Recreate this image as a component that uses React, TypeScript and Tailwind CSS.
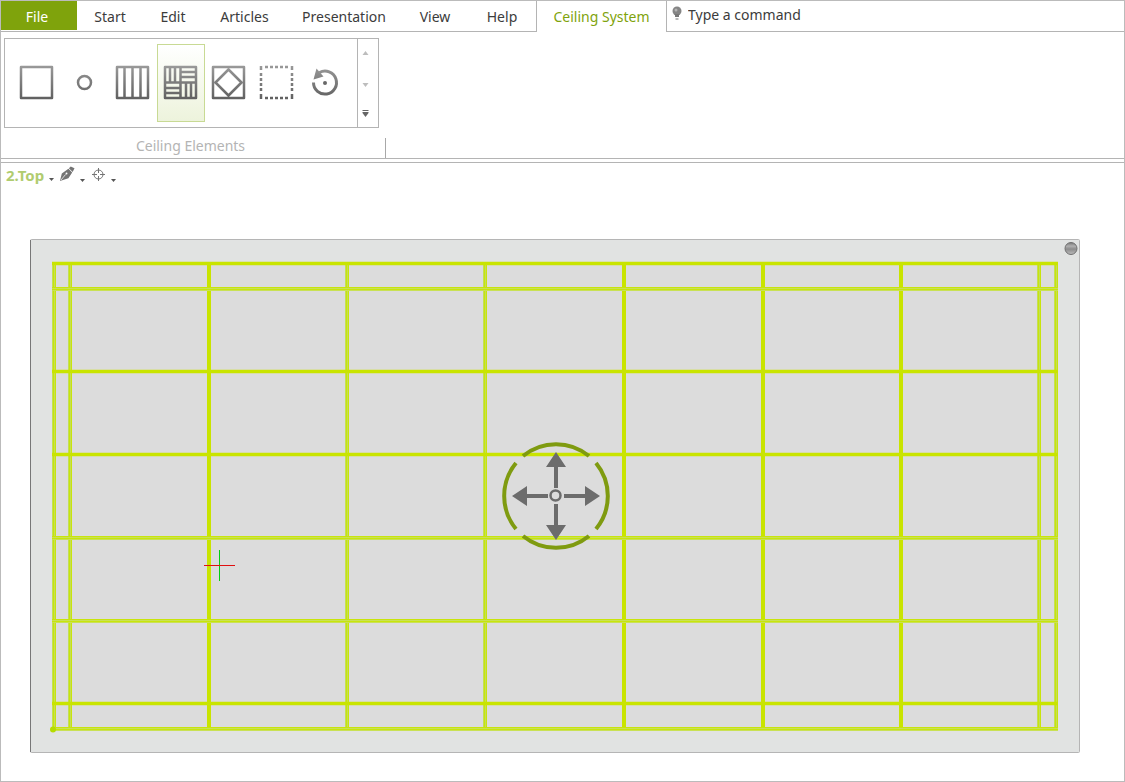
import { useState } from "react";

const tabs = [
  { label: "Start", width: "w-[66px]" },
  { label: "Edit", width: "w-[60px]" },
  { label: "Articles", width: "w-[83px]" },
  { label: "Presentation", width: "w-[116px]" },
  { label: "View", width: "w-[66px]" },
  { label: "Help", width: "w-[68px]" },
];

const elements = [
  {
    name: "Single panel",
    icon: <rect x="3" y="3" width="31" height="31" />,
  },
  {
    name: "Spotlight",
    icon: <circle cx="18.5" cy="18.5" r="6.5" />,
  },
  {
    name: "Strip panels",
    icon: <path d="M3 3h31v31h-31zM10.5 3v31M18.5 3v31M26.5 3v31" />,
  },
  {
    name: "Ceiling grid",
    icon: (
      <path d="M3 3h31v31h-31zM18.5 3v31M3 18.5h31M8 3v15M13 3v15M18.5 8h15M18.5 13h15M3 24h15M3 29h15M24 18.5v15M29 18.5v15" />
    ),
  },
  {
    name: "Diagonal panel",
    icon: <path d="M3 3h31v31h-31zM18.5 5.5l13 13l-13 13l-13 -13z" />,
  },
  {
    name: "Selection area",
    icon: (
      <path d="M3 2v4M3 9v3M3 14v3M3 19v3M3 24v3M3 30v5M34 2v4M34 9v3M34 14v3M34 19v3M34 24v3M34 30v5M7 3h3M12 3h3M17 3h3M22 3h3M27 3h3M7 34h3M12 34h3M17 34h3M22 34h3M27 34h3" />
    ),
  },
  {
    name: "Rotate",
    icon: (
      <>
        <path strokeWidth="3" d="M7.500 18.500a11.500 11.500 0 1 0 6 -10" />
        <path stroke="none" fill="url(#metal)" d="M10.500 4.500l-3 11l10 -3z" />
        <circle cx="19" cy="19" r="2" stroke="none" fill="#686868" />
      </>
    ),
  },
];

const columns = [
  { at: 54, double: true },
  { at: 70, double: true },
  { at: 209, double: false },
  { at: 347, double: true },
  { at: 485, double: true },
  { at: 624, double: false },
  { at: 763, double: false },
  { at: 901, double: false },
  { at: 1039, double: true },
  { at: 1056, double: true },
];

const rows = [
  { at: 288, double: true },
  { at: 371, double: false },
  { at: 454, double: false },
  { at: 537, double: true },
  { at: 620, double: true },
  { at: 728, double: true },
  { at: 703, double: false },
  { at: 263, double: false },
];

function Caret() {
  return (
    <svg width="5" height="3" viewBox="0 0 5 3" className="mt-2">
      <path d="M0 0h5l-2.500 3z" fill="#555555" />
    </svg>
  );
}

function CeilingPlan() {
  return (
    <svg viewBox="30 239 1050 514" className="block w-full h-auto" role="img" aria-label="Ceiling plan, top view">
      <defs>
        <linearGradient id="ball" x1="0" y1="0" x2="0" y2="1">
          <stop offset="0" stopColor="#777777" />
          <stop offset="0.3" stopColor="#b0b0b0" />
          <stop offset="0.55" stopColor="#8c8c8c" />
          <stop offset="1" stopColor="#bcbcbc" />
        </linearGradient>
      </defs>
      <rect x="30.5" y="239.500" width="1049" height="513" rx="1" fill="#e1e3e2" stroke="#b5b5b5" />
      <path d="M30.5 240v512" stroke="#777777" />
      <rect x="54" y="263" width="1003" height="466" fill="#dcdcdc" />

      {/* Ceiling grid, profiles with a light core are drawn as double lines */}
      {columns.map(c =>
        c.double ? (
          <g key={c.at}>
            <path d={`M${c.at} 262V730`} stroke="#c3df55" strokeWidth="4" />
            <path d={`M${c.at - 0.5} 262V730M${c.at + 1.5} 262V730`} stroke="#c8e40c" />
          </g>
        ) : (
          <path key={c.at} d={`M${c.at} 262V730`} stroke="#c9e400" strokeWidth="4" />
        )
      )}
      {rows.map(r =>
        r.double ? (
          <g key={r.at}>
            <path d={`M52 ${r.at + 1}H1058`} stroke="#c9e154" strokeWidth="4" />
            <path d={`M52 ${r.at - 0.5}H1058M52 ${r.at + 1.5}H1058`} stroke="#c8e40c" />
          </g>
        ) : (
          <path key={r.at} d={`M52 ${r.at + 0.5}H1058`} stroke="#c9e400" strokeWidth="3.500" />
        )
      )}
      <circle cx="53" cy="729.500" r="3" fill="#b5dc00" />
      <circle cx="1071" cy="248.500" r="6" fill="url(#ball)" stroke="#707070" />

      {/* Move handle */}
      <g fill="none" stroke="#7f9b10" strokeWidth="4">
        <path d="M523 456a52 52 0 0 1 66 0" />
        <path d="M596 463a52 52 0 0 1 0 66" />
        <path d="M589 536a52 52 0 0 1 -66 0" />
        <path d="M516 529a52 52 0 0 1 0 -66" />
      </g>
      <path d="M556 466v22M556 504v22M526 496h22M564 496h22" stroke="#6c6c6c" strokeWidth="4" />
      <path
        d="M556 452l10 15h-20zM556 540l10 -15h-20zM512 496l15 -10v20zM600 496l-15 -10v20z"
        fill="#6c6c6c"
      />
      <circle cx="555.500" cy="495.500" r="5" fill="#dcdcdc" stroke="#6c6c6c" strokeWidth="2.500" />

      {/* Drawing cursor */}
      <path d="M219.500 550v31" stroke="#00d010" />
      <path d="M204 565.500h31" stroke="#e01010" />
    </svg>
  );
}

export default function App() {
  const [active, setActive] = useState("Ceiling grid");

  return (
    <div className="min-h-screen flex flex-col border border-[#bbbbbb] bg-white font-['Noto_Sans','Open_Sans',sans-serif] text-sm text-[#3c3c3c]">
      <svg width="0" height="0" className="absolute">
        <linearGradient id="metal" gradientUnits="userSpaceOnUse" x1="0" y1="2" x2="0" y2="35">
          <stop offset="0" stopColor="#999999" />
          <stop offset="1" stopColor="#606060" />
        </linearGradient>
      </svg>

      <header className="flex h-[31px]">
        <nav className="flex shrink-0">
          <div className="border-b border-[#b4b4b4]">
            <button className="block w-[76px] h-[29px] bg-[#7fa30c] text-white pt-0.5 pr-1">File</button>
          </div>
          {tabs.map(t => (
            <button key={t.label} className={`${t.width} pt-0.5 border-b border-[#b4b4b4]`}>
              {t.label}
            </button>
          ))}
          <button className="w-[131px] border-x border-[#b4b4b4] text-[#7fa30c]">Ceiling System</button>
        </nav>
        <label className="flex flex-1 gap-[5px] px-1 border-b border-[#b4b4b4]">
          <svg width="12" height="14" viewBox="0 0 12 14" className="mt-[5px]">
            <circle cx="6" cy="5" r="4.500" fill="#858585" />
            <circle cx="5" cy="4" r="1.500" fill="#b4b4b4" />
            <path d="M4 8h4v3h-4zM4.500 12.500h3v1h-3z" fill="#777777" />
          </svg>
          <input
            aria-label="Type a command"
            placeholder="Type a command"
            className="flex-1 h-[27px] min-w-0 outline-none placeholder:text-[#3c3c3c]"
          />
        </label>
      </header>

      <section className="flex border-b border-[#b4b4b4]">
        <div className="flex flex-col pl-[3px] pt-[6px] w-[385px]">
          <div className="flex w-[375px] h-[90px] border border-[#b4b4b4]">
            <div className="flex flex-1 items-center px-2">
              {elements.map(el => (
                <button
                  key={el.name}
                  aria-label={el.name}
                  onClick={() => setActive(el.name)}
                  className={
                    active === el.name
                      ? "flex w-12 h-[78px] items-center justify-center border border-[#c8da94] bg-linear-to-b from-white to-[#edf3dc]"
                      : "flex w-12 h-[78px] items-center justify-center"
                  }
                >
                  <svg
                    width="38"
                    height="38"
                    viewBox="0 0 38 38"
                    fill="none"
                    stroke="url(#metal)"
                    strokeWidth="2.500"
                    strokeLinejoin="round"
                    className="shrink-0"
                  >
                    {el.icon}
                  </svg>
                </button>
              ))}
            </div>
            <div className="flex flex-col w-[21px] border-l border-[#b4b4b4]">
              <button aria-label="Scroll up" className="flex flex-1 items-center pl-1 pb-1">
                <svg width="7" height="4" viewBox="0 0 7 4"><path d="M3.500 0l3 4h-6z" fill="#bdbdbd" /></svg>
              </button>
              <button aria-label="Scroll down" className="flex flex-1 items-center pl-1">
                <svg width="7" height="4" viewBox="0 0 7 4"><path d="M3.500 4l3 -4h-6z" fill="#bdbdbd" /></svg>
              </button>
              <button aria-label="More elements" className="flex flex-1 items-center pl-1">
                <svg width="7" height="7" viewBox="0 0 7 7"><path d="M0.500 0h6v1h-6zM0.500 2h6v1l-3 4l-3 -4z" fill="#666666" /></svg>
              </button>
            </div>
          </div>
          <div className="flex h-[30px] justify-end">
            <h2 className="flex-1 pt-2 pr-2 text-center text-[#b4b4b4]">Ceiling Elements</h2>
            <span className="self-end w-px h-5 bg-[#a8a8a8]" />
          </div>
        </div>
      </section>

      <main className="flex-1 mt-[3px] border-t border-[#b4b4b4]">
        <div className="flex items-center gap-[5px] h-[26px] pl-[5px]">
          <button className="flex items-center gap-[5px] text-[15px] font-bold text-[#b0cc70]">
            2.Top <Caret />
          </button>
          <button aria-label="Drawing style" className="flex items-center gap-[5px]">
            <svg width="16" height="16" viewBox="0 0 17 17" className="mb-1">
              <path d="M1 16l2 -8l7 -5l4 4l-4 6zM10.500 2.500l2 -2l4 2l-2 4z" fill="#747474" />
              <path d="M2 15l5 -6" stroke="#ffffff" strokeWidth="0.800" />
              <circle cx="8" cy="8" r="1" fill="#ffffff" />
            </svg>
            <Caret />
          </button>
          <button aria-label="Snap point" className="flex items-center gap-[5px]">
            <svg width="16" height="16" viewBox="0 0 16 16" fill="none" stroke="#747474" className="mb-1">
              <circle cx="8.500" cy="8.500" r="4.500" />
              <path d="M8.500 2v5M8.500 10v5M2 8.500h5M10 8.500h5" />
            </svg>
            <Caret />
          </button>
        </div>
        <div className="pl-[29px] pr-11 pt-[50px]">
          <CeilingPlan />
        </div>
      </main>
    </div>
  );
}
